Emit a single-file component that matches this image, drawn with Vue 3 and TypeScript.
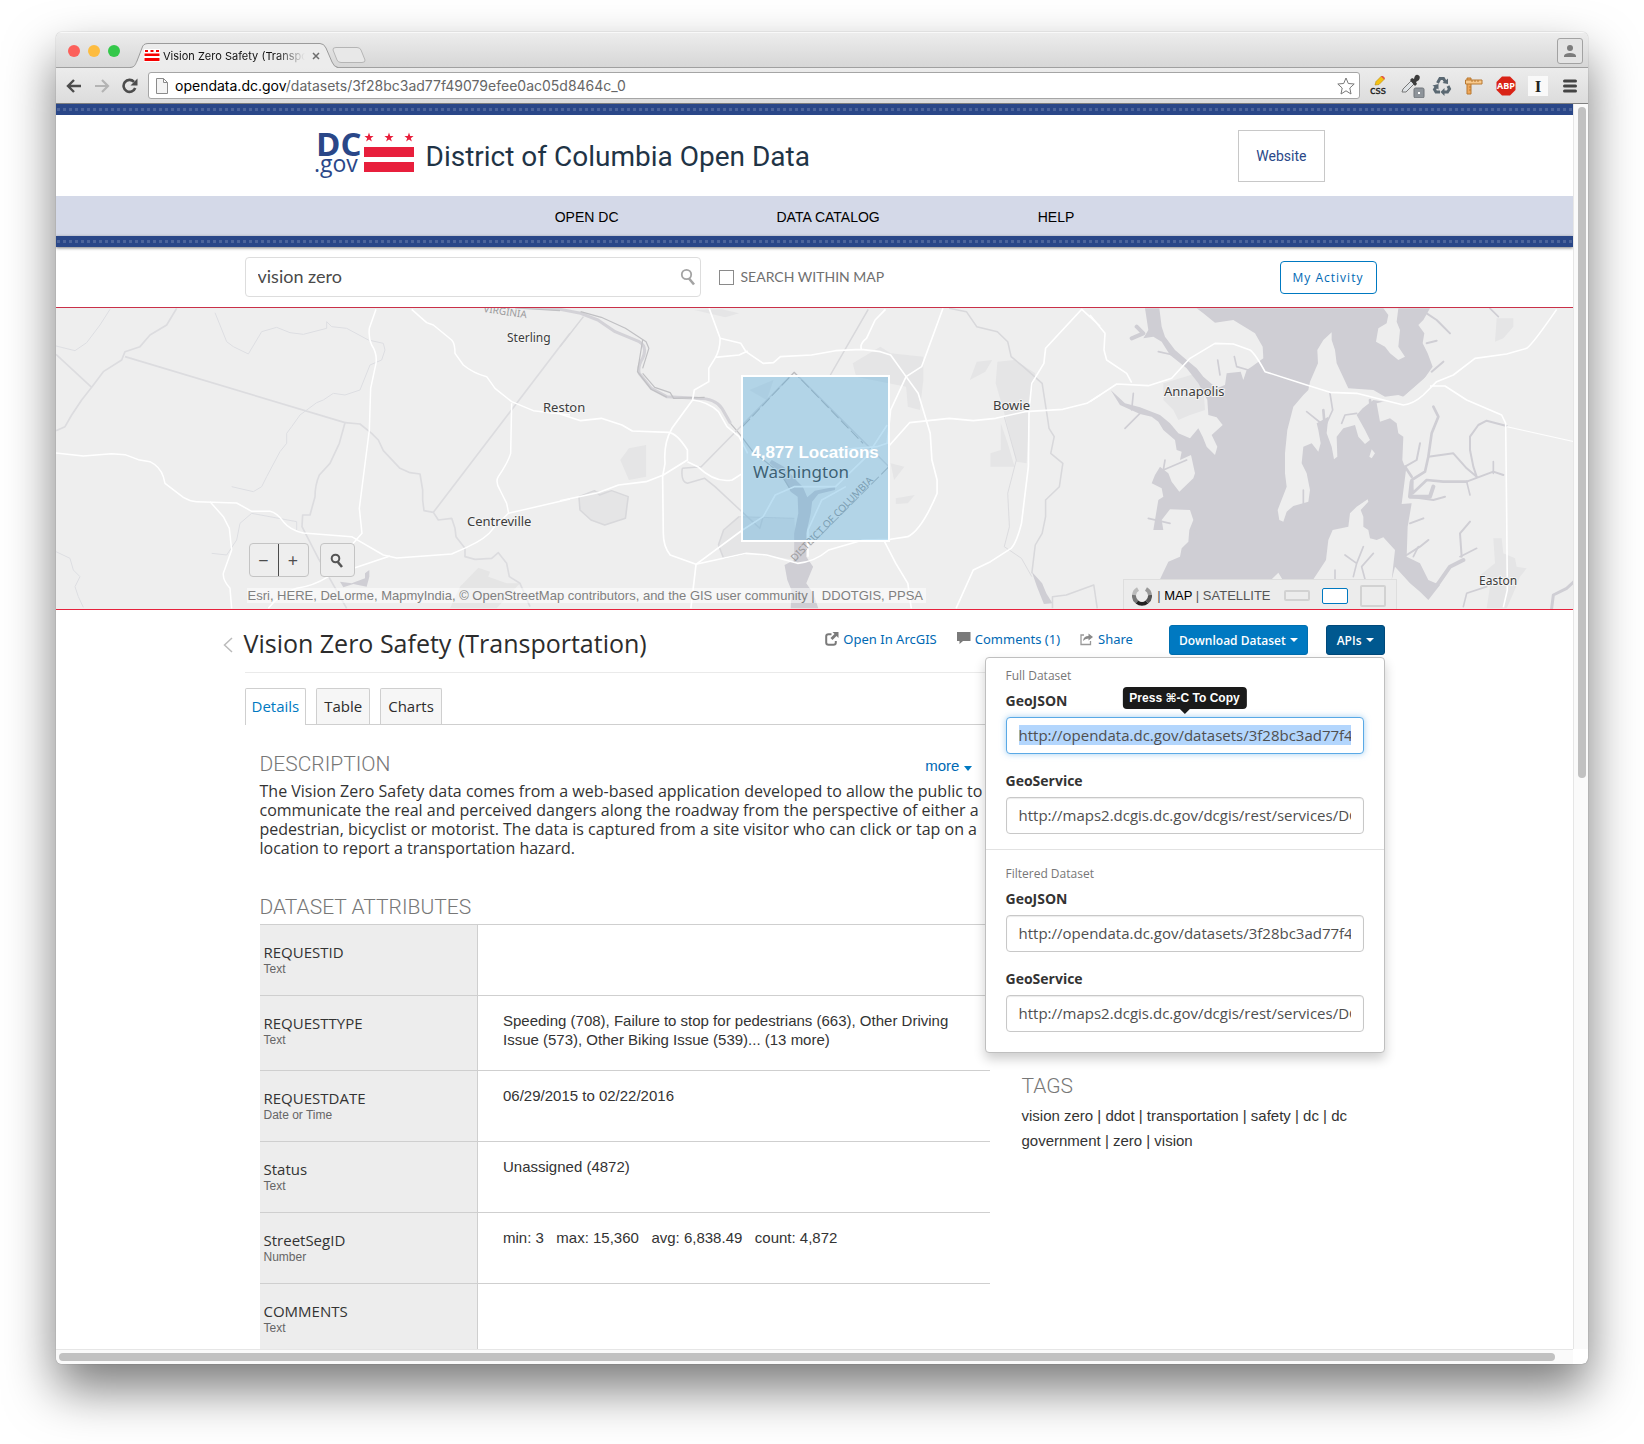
<script setup lang="ts">
import { onMounted, ref } from 'vue'

interface Attribute {
  name: string
  type: string
  value: string
}

const attributes: Attribute[] = [
  { name: 'REQUESTID', type: 'Text', value: '' },
  {
    name: 'REQUESTTYPE',
    type: 'Text',
    value: 'Speeding (708), Failure to stop for pedestrians (663), Other Driving Issue (573), Other Biking Issue (539)... (13 more)',
  },
  { name: 'REQUESTDATE', type: 'Date or Time', value: '06/29/2015 to 02/22/2016' },
  { name: 'Status', type: 'Text', value: 'Unassigned (4872)' },
  { name: 'StreetSegID', type: 'Number', value: 'min: 3   max: 15,360   avg: 6,838.49   count: 4,872' },
  { name: 'COMMENTS', type: 'Text', value: '' },
]

const tabs = ['Details', 'Table', 'Charts']
const activeTab = ref('Details')
const query = ref('vision zero')
const withinMap = ref(false)

const geojson = 'http://opendata.dc.gov/datasets/3f28bc3ad77f49079efee0ac05d8464c_0.geojson'
const service = 'http://maps2.dcgis.dc.gov/dcgis/rest/services/DCGIS_DATA/Transportation_WebMercator'

const firstUrl = ref<HTMLInputElement | null>(null)
onMounted(() => {
  firstUrl.value?.focus({ preventScroll: true })
  firstUrl.value?.select()
})
</script>

<template>
  <div class="window">
    <div class="titlebar">
      <div class="lights"><i class="red"></i><i class="yellow"></i><i class="green"></i></div>
      <div class="tab">
        <svg class="tab-shape" viewBox="0 0 208 25" width="208" height="25" aria-hidden="true">
          <path d="M0 25C5 24 5 22 7 18L12 5Q13 1 18 1H190Q194 1 196 5L202 19Q204 24 208 25Z" fill="#ececec" />
          <path d="M0 24.5C5 24 5 22 7 18L12 5Q13 .5 18 .5H190Q194 .5 196 5L202 19Q204 24 208 24.5" fill="none" stroke="#9b9b9b" />
        </svg>
        <div class="tab-body">
          <svg class="favicon" viewBox="0 0 16 13" width="16" height="13" aria-hidden="true">
            <path d="M0 0H16V13H0Z" fill="#fff" />
            <path d="M.5 4.500H15.500V7H.5ZM.5 9H15.500V12H.5ZM1 1H4V3H1ZM6.500 1H9.500V3H6.500ZM12 1H15V3H12Z" fill="#f60000" />
          </svg>
          <span class="tab-title">Vision Zero Safety (Transportation)</span>
          <svg viewBox="0 0 8 8" width="8" height="8" aria-hidden="true"><path d="M1 1L7 7M7 1L1 7" stroke="#6d6d6d" stroke-width="1.500" /></svg>
        </div>
      </div>
      <svg class="new-tab" viewBox="0 0 34 17" width="34" height="17" aria-hidden="true">
        <path d="M4 .5H25Q28 .5 29 3L33 13Q33.500 15.500 30 15.500H9Q6 15.500 5 13L1 3Q.5 .5 4 .5Z" fill="#e8e8e8" stroke="#b5b5b5" />
      </svg>
      <button class="profile" aria-label="Profile">
        <svg viewBox="0 0 12 12" width="12" height="12"><circle cx="6" cy="3" r="3" fill="#7c7c7c" /><path d="M0 12V10.500Q1 8 6 8T12 10.500V12Z" fill="#7c7c7c" /></svg>
      </button>
    </div>

    <div class="toolbar">
      <div class="history">
        <svg viewBox="0 0 16 14" width="16" height="14"><path d="M8 1L2 7L8 13M2 7H15" fill="none" stroke="#4c4c4c" stroke-width="2.400" /></svg>
        <svg viewBox="0 0 16 14" width="16" height="14"><path d="M8 1L14 7L8 13M14 7H1" fill="none" stroke="#b4b4b4" stroke-width="2.200" /></svg>
        <svg viewBox="0 0 16 16" width="16" height="16"><path d="M13.200 10A6 6 0 1 1 12 3.800" fill="none" stroke="#4c4c4c" stroke-width="2.600" /><path d="M15.500 .5V7.500H8.500Z" fill="#4c4c4c" /></svg>
      </div>
      <div class="address">
        <svg viewBox="0 0 12 16" width="12" height="16"><path d="M.5 .5H7.500L11.500 4.500V15.500H.5ZM7.500 .5V4.500H11.500" fill="#f4f4f4" stroke="#8b8b8b" /></svg>
        <span class="url"><b>opendata.dc.gov</b>/datasets/3f28bc3ad77f49079efee0ac05d8464c_0</span>
        <svg viewBox="0 0 18 18" width="18" height="18"><path d="M9 1L11.300 6.500L17.200 7L12.800 11L14 17L9 13.800L4 17L5.200 11L.8 7L6.700 6.500Z" fill="#fff" stroke="#777" /></svg>
      </div>
      <div class="extensions">
        <svg viewBox="0 0 20 20" width="20" height="20">
          <path d="M6 9L7 5.500L12.500 0L15.500 3L10 8.500Z" fill="#f5c211" stroke="#b98a10" stroke-width=".6" /><path d="M12 .5L13.500 -.5L16 2L15.200 3.500Z" fill="#e2574c" />
          <text x="1" y="18" font-family="DejaVu Sans" font-size="10" fill="#1b1b1b" stroke="#1b1b1b" stroke-width=".3">css</text>
        </svg>
        <svg class="dropper" viewBox="0 0 24 24" width="24" height="24">
          <path d="M1 18L2 15L10 7L13 10L5 18Z" fill="#dfe3e6" stroke="#777" /><path d="M9 6L11 4L13 5Q14 0 17 1T18 6L15 8L16 10L14 12Z" fill="#3c3c3c" />
          <rect x="13" y="14" width="10" height="10" rx="1.500" fill="#8e949a" stroke="#70757a" /><rect x="17" y="18" width="2" height="2" fill="#fff" />
        </svg>
        <svg viewBox="0 0 20 20" width="20" height="20">
          <g fill="none" stroke="#5a6872" stroke-width="3"><path d="M5.500 7L8 2.500H11.500L13.500 6" /><path d="M16 10L17.500 13L15.500 16H12" /><path d="M8 16H4L2.500 13.500L4 11" /></g>
          <path d="M10.500 7L16 8V2.500ZM12.500 12V20L8.500 16ZM.5 9.500L6.500 8V13.500Z" fill="#5a6872" />
        </svg>
        <svg viewBox="0 0 20 20" width="20" height="20"><path d="M3 2H7V18H3Z" fill="#f0a758" stroke="#b87930" /><path d="M1.500 4H18V8H1.500Z" fill="#f8c98c" stroke="#b87930" /><path d="M8 4V6M11 4V6M14 4V6M5 11H7M5 14H7" stroke="#b87930" /></svg>
        <svg viewBox="0 0 20 20" width="20" height="20">
          <path d="M6 .5H14L19.500 6V14L14 19.500H6L.5 14V6Z" fill="#d92316" />
          <text x="10" y="13" text-anchor="middle" font-family="Open Sans" font-size="9" font-weight="700" fill="#fff">ABP</text>
        </svg>
        <svg viewBox="0 0 20 20" width="20" height="20">
          <rect width="20" height="20" fill="#f9f9f9" />
          <text x="10" y="16" text-anchor="middle" font-family="Liberation Serif" font-size="17" font-weight="700" fill="#222">I</text>
        </svg>
        <svg class="burger" viewBox="0 0 14 14" width="14" height="14"><path d="M1.500 2H12.500M1.500 7H12.500M1.500 12H12.500" stroke="#444" stroke-width="3" stroke-linecap="round" /></svg>
      </div>
    </div>

    <div class="viewport">
      <div class="page">
        <div class="stripe"></div>
        <header class="site">
          <div class="container brand">
            <svg class="logo" viewBox="315 130 100 50" width="100" height="50" role="img" aria-label="DC.gov">
              <g fill="#2a4788">
                <text x="316" y="155" font-family="Open Sans" font-size="33" font-weight="700">DC</text>
                <text x="314" y="171" font-family="Open Sans" font-size="23">.gov</text>
              </g>
              <g fill="#e81f3c">
                <path d="M364 146H414V156H364ZM364 161H414V171H364Z" />
                <path id="star" d="M369 131.500L370.200 135H373.600L370.800 137.200L371.900 140.600L369 138.500L366.100 140.600L367.200 137.200L364.400 135H367.800Z" />
                <use href="#star" x="20" /><use href="#star" x="40" />
              </g>
            </svg>
            <h1>District of Columbia Open Data</h1>
            <a class="website" href="#">Website</a>
          </div>
          <nav>
            <a href="#">OPEN DC</a><a href="#">DATA CATALOG</a><a href="#">HELP</a>
          </nav>
        </header>
        <div class="stripe raised"></div>

        <div class="search-row">
          <div class="container search">
            <div class="search-box">
              <input v-model="query" type="text" aria-label="Search datasets" />
              <svg viewBox="0 0 16 18" width="16" height="18"><circle cx="6.500" cy="6.500" r="4.700" fill="none" stroke="#a3a3a3" stroke-width="1.800" /><path d="M9 10.500L14 16.500" stroke="#a3a3a3" stroke-width="2.600" /></svg>
            </div>
            <label class="within"><input v-model="withinMap" type="checkbox" />SEARCH WITHIN MAP</label>
            <button class="activity">My Activity</button>
          </div>
        </div>

        <section class="map" aria-label="Map">
          <svg class="canvas" viewBox="56 308 1517 301" preserveAspectRatio="xMidYMid slice">
            <rect x="56" y="308" width="1517" height="301" fill="#eeeeee" />

            <g transform="translate(50 300) scale(.33333)" fill="none" stroke-linejoin="round">
              <path d="M1200 925L1230 860L1285 803L1320 815L1315 830L1370 850L1410 850L1340 925Z" fill="#e5e5e5" stroke="none" />
              <path d="M870 845L905 850L945 835V820L958 810V830L950 860L910 852L880 862Z" fill="#cfced4" stroke="none" />
              <g stroke="#dcdcdf" stroke-width="5">
                <path d="M18 392L45 380L65 345L95 300L125 262L160 215L215 180L225 155L270 140L300 105L350 75L380 25M18 163L125 262M225 170L885 368L868 430L840 490L808 525Q795 555 795 590L780 645H758L756 680L805 775L890 925" />
                <path d="M885 368L930 372L965 400L985 420L1000 452L1050 505L1080 518L1110 522L1118 570V600L1122 632L1150 637L1560 100M1150 637L1165 660L1205 655L1215 685L1218 710L1245 745V770L1275 778L1325 775L1345 758L1370 790L1378 830L1410 850L1440 920" />
              </g>
              <g stroke="#dddee2" stroke-width="3">
                <path d="M18 138L75 152L110 128L150 75L180 28M495 38L530 125L550 140L595 162L635 95L680 82L720 98L760 103L830 85V65L845 80L890 85L955 120L1000 130L1005 150L995 180L960 195L930 270L885 285L850 280L820 300L800 308L750 345L725 380L710 400V430L690 455L650 530L635 560L610 575L545 560" />
                <path d="M18 755L60 775L70 810L90 830L75 860L85 890L100 922M485 760L530 765L560 720L570 670L605 640L740 665V690" />
              </g>
              <g stroke="#fff" stroke-width="4.500">
                <path d="M18 459L100 468L185 461L225 464L265 479L300 485Q330 500 340 530L345 550L400 592Q420 604 440 605L560 609L605 634H660Q680 638 700 665Q720 690 760 699L905 710L1000 765L1040 774L1205 762L1250 742Q1310 715 1330 685L1375 640L1560 597" />
                <path d="M480 605L520 650L538 685L545 750L520 820Q518 840 540 865L545 925M978 28L958 85Q955 115 965 135Q982 160 978 190L962 265L958 390L928 625L936 700L905 735M1085 28L1130 68L1150 75L1205 120Q1215 130 1215 160L1240 195Q1270 220 1310 230L1335 265L1385 305L1450 332L1560 345" />
                <path d="M1385 310L1382 460Q1375 485 1345 530Q1335 545 1350 570L1370 610L1376 640M1020 768L835 830Q790 858 740 865Q690 880 655 925" />
              </g>
            </g>

            <g transform="translate(560 300) scale(.34439 .33333)" fill="none" stroke-linejoin="round">
              <path d="M850 190L930 140L960 160L1055 170V240L1045 330L1010 320L1005 260L860 230ZM1270 185L1320 180L1380 220L1365 300L1355 490L1325 485L1290 340L1265 250ZM200 445L250 435V530L200 540L175 480ZM55 590L100 572H150L198 590L190 655L130 675L90 660L58 630ZM460 735L475 690L520 650L680 655L690 780L540 760L475 775ZM1190 240L1210 185L1255 180L1235 215ZM975 595L1030 585L1010 610L975 612ZM390 30L470 28L520 40L480 52ZM550 270L620 240L600 300ZM960 490L1000 500L970 540ZM1280 370L1300 430L1320 500H1250V460L1280 450Z" fill="#e5e5e6" />
              <path d="M615 480L650 500L690 545L705 560L718 592L740 572L800 560L798 570L750 582L732 605L728 640L715 700V770L735 800L715 850L735 880L750 925H670L672 870L660 840L652 795L680 780V700L692 640L690 590L670 575L640 520L608 488Z" fill="#cfced4" />
              <path d="M1370 815L1400 850L1412 880L1430 910L1405 912L1385 860Z" fill="#cfced4" />
              <path d="M-130 20L0 28L60 40L110 60L160 95L230 125Q255 140 240 175Q225 200 230 220L265 265L310 290L400 295Q450 295 470 325L495 370" stroke="#d3d2d7" stroke-width="9" />
              <path d="M60 35L120 52L190 85L250 125L258 145L240 205M240 220L275 262L320 278L330 295L420 292M-130 24L0 32M495 370L520 400L560 455L640 520L670 570M240 120L225 215L265 268L310 292" stroke="#c0c0c3" stroke-width="3.500" />
              <g stroke="#d8d8db" stroke-width="4.500">
                <path d="M68 50L0 140M895 28L785 225M355 505Q350 545 370 550L420 535L450 560L580 685L590 650M355 505L410 500L680 217L955 500M460 735L475 690L520 650M55 590L100 572L115 585L150 572L198 590L190 655L130 675L90 660L58 630ZM460 735L475 775L540 760M1430 925V890L1470 885L1550 855L1560 925" />
                <path d="M1130 25L1180 35L1210 80L1270 95L1300 125L1310 170L1345 200L1400 250L1415 350L1420 385L1435 410L1425 460L1460 490L1450 560L1410 600V650L1400 700L1380 735L1370 820" />
                <path d="M1290 350L1325 480L1300 580L1305 680L1290 740L1340 775L1370 830M520 650L680 655" stroke-width="2.500" />
              </g>
              <path d="M955 500L680 785M530 380L680 217L880 430" stroke="#b9b9bb" stroke-width="3" stroke-dasharray="32 10" />
              <g stroke="#fff" stroke-width="4.800">
                <path d="M433 25L465 115Q465 150 450 175L432 205V245L390 270L385 300L325 385Q300 430 305 490L298 530L300 700Q300 740 320 765L395 793L540 760L600 765L690 790Q740 785 780 750L880 720L960 718L1010 710Q1050 690 1095 580V540L1080 480L1075 400L1040 280L1005 230L960 165L930 155L875 148L800 152L730 165L640 170L620 188L590 190L540 155L525 130L465 115M450 172L520 165L545 153M875 148Q870 130 890 115L915 60L945 28" />
                <path d="M0 342L60 362L120 355L180 375L210 393L315 397Q340 400 370 450V480L300 525L250 545L170 555L110 578L0 602M370 485L400 500Q450 550 500 540L530 520M385 300Q430 305 460 335L485 380L520 410L545 460M1112 25L1050 200L1005 230L960 330L950 430L920 440L800 450M955 438L1015 368L1130 355L1200 362L1265 355L1350 335L1460 328L1530 310L1568 285" />
                <path d="M1568 78L1515 28L1410 145L1405 190L1370 250L1362 330L1360 500L1340 670Q1325 730 1310 745L1250 785L1200 810L1150 925M380 925L395 793L530 690L590 650L625 585L680 560L800 560L890 470L950 375M940 720L975 790L1010 850L1020 925M720 770V690L760 600L830 560" />
              </g>
            </g>

            <g transform="translate(1090 300) scale(.33333)" fill="none" stroke-linejoin="round">
              <path d="M220 250L320 220L340 260L345 330L300 345L265 360L250 330L220 300ZM1220 55H1270V80L1240 115L1215 125ZM1210 715H1235L1240 760L1275 775L1280 800L1310 805L1290 830L1270 880L1250 925H1190L1200 860L1165 830L1215 790Z" fill="#e5e5e6" />
              <path d="M165 25H1020L1000 60L985 75L1003 100L998 130L1013 160L1028 200L1000 240L940 290L860 310L870 365L900 355L920 370L925 400L940 410L937 480L948 510L935 612L965 610L953 680L950 770L990 790L1015 840L1050 855L1015 900L990 875L960 850L915 800L905 840L920 925H200L210 838L235 785L270 770L275 745L295 725L298 690L310 660L300 630L240 628L215 660L220 690L190 690L205 600L220 590L215 565L185 550L195 525L210 500L235 520L245 545L268 575L310 535L315 520L303 465L270 480L275 455L260 450L255 420L220 390L205 365L185 350L150 342L90 315L62 270L105 310L150 322L210 345L240 370L265 400L300 415L325 385L338 410L350 440L375 465L382 440L365 405L398 375L380 352L355 345L352 300L325 250L290 205L240 165L215 125L190 110L160 115L175 90Z" fill="#cfced4" />
              <g fill="#eeeeee">
                <path d="M208 25H320L340 40L375 68L430 60L495 100L518 140L520 175L485 200L470 210L460 240L452 215L410 220L405 255L380 265L340 230L320 205L290 180L255 150L225 110L215 80Z" />
                <path d="M725 97L700 120L682 150L684 190L660 245L655 270L640 285L610 320L592 390L585 460V520L590 560L563 630L568 660L580 665L590 635L610 618L655 605L660 570L650 520L635 490L640 440L665 430L685 455L692 430L685 390L680 370L715 350L710 400L725 440L732 478L742 470L740 410L760 385L795 375L805 410L825 432L840 420L825 390L800 345L818 325L850 300L940 315L1025 240L1020 220L940 290L925 285L885 290L850 270L775 265L740 190L735 150L725 120Z" />
                <path d="M880 25L895 45L890 70L865 85L858 125L885 140L900 160L925 180L945 170L925 140L930 90L920 65L925 25ZM845 448L855 460L845 475L838 470ZM833 598L800 620L780 640L775 680L728 690L715 720L708 780L685 815L670 838L650 925H930L905 840L915 750L880 712L860 720L840 715L835 690L820 680L820 650L812 630L835 605ZM545 838L565 818L577 838Z" />
              </g>
              <g stroke="#cfced4" stroke-width="6" stroke-linecap="round">
                <path d="M945 500L980 480L990 430M1015 470L1090 460L1130 505L1160 530L1150 500L1140 450V410L1165 375L1190 362L1250 378M1130 545L1170 530L1210 515L1240 525M1115 770L1110 700L1140 665M950 765L990 740L1015 720M960 670L1000 655M1010 40L1040 60L1080 100M1025 215L1060 185M1010 130L1040 122M960 590L1030 600L1065 590" />
                <path d="M790 830L800 790L765 765M850 760L815 800L825 838M700 375L650 335M705 380L728 330L720 280M755 370L765 345L800 340M205 155L250 165M130 280L125 330M105 385L150 340M383 180L390 225M433 170L440 200L475 210M1120 920L1130 880L1190 860M1200 25L1225 50M735 838V810M820 740L800 790M985 740L970 770M1110 770L1160 745M1130 545L1140 585M1210 485V520M225 480L220 510L290 480M175 655L240 670M320 700L310 690M640 570V610" stroke-width="5" />
                <path d="M1030 320L1045 350L1025 400L1015 470L1005 515L965 540L968 580L1010 540L1060 545L1130 545M840 300L845 350M700 330L705 390M945 500L965 530" stroke-width="8" />
                <path d="M1015 880L1045 850L1080 800L1120 780M965 545L960 590L1020 590L1030 560M140 80L160 100L125 115" stroke-width="12" />
                <path d="M1385 925L1390 885L1430 865L1452 845" stroke-width="9" />
              </g>
              <g stroke="#fff" stroke-width="4.800">
                <path d="M0 45L45 100L42 150L50 180L110 220L125 248M0 305L80 252L175 257L245 235L300 175L375 130L430 132L480 150Q495 160 525 215L650 255L720 277L800 280L940 315Q970 312 1000 285L1040 245L1090 225L1155 175L1250 162L1310 145Q1330 130 1400 28M1020 258H1065L1130 300L1235 345L1247 370L1250 640L1252 870L1240 922" />
                <path d="M1250 380L1452 425" stroke-width="3" />
              </g>
            </g>

            <g class="places">
              <text x="507" y="342" font-size="12">Sterling</text>
              <text x="543" y="412">Reston</text>
              <text x="467" y="526">Centreville</text>
              <text x="993" y="410">Bowie</text>
              <text x="1164" y="396">Annapolis</text>
              <text x="1479" y="585" font-size="12">Easton</text>
              <text x="753" y="478" font-size="17">Washington</text>
            </g>
            <g class="regions">
              <text transform="translate(483 312) rotate(8)">VIRGINIA</text>
              <text transform="translate(795 562) rotate(-46)">DISTRICT OF COLUMBIA</text>
            </g>
            <rect x="742" y="376" width="147" height="165" fill="#42a4db" fill-opacity=".35" stroke="#fff" stroke-width="2" />
            <text class="count" x="815" y="458" text-anchor="middle">4,877 Locations</text>
          </svg>

          <div class="map-overlay container">
            <div class="map-left">
              <div class="map-buttons">
                <div class="zoom"><button aria-label="Zoom out">−</button><button aria-label="Zoom in">+</button></div>
                <button class="find" aria-label="Find on map">
                  <svg viewBox="0 0 14 16" width="14" height="16"><circle cx="5.500" cy="6.500" r="3.800" fill="none" stroke="#555" stroke-width="2" /><path d="M7.800 10L12 15" stroke="#555" stroke-width="2.600" /></svg>
                </button>
              </div>
              <p class="credits">Esri, HERE, DeLorme, MapmyIndia, © OpenStreetMap contributors, and the GIS user community |&nbsp; DDOTGIS, PPSA</p>
            </div>
            <div class="map-modes">
              <svg viewBox="0 0 20 20" width="20" height="20" fill="none" stroke-width="4">
                <path d="M6 3A8 8 0 0 0 2 9" stroke="#bbb" /><path d="M2 9A8 8 0 0 0 5 16" stroke="#777" /><path d="M5 16A8 8 0 0 0 15 16" stroke="#222" /><path d="M15 16A8 8 0 0 0 18 9" stroke="#555" /><path d="M18 9A8 8 0 0 0 14 3" stroke="#999" />
              </svg>
              <span class="mode">| <b>MAP</b> | SATELLITE</span>
              <button class="size small" aria-label="Small map"></button>
              <button class="size medium" aria-label="Medium map"></button>
              <button class="size large" aria-label="Large map"></button>
            </div>
          </div>
        </section>

        <main class="container content">
          <div class="heading">
            <a class="back" href="#" aria-label="Back"><svg viewBox="0 0 10 16" width="10" height="16"><path d="M9 1L1.500 8L9 15" fill="none" stroke="#bbb" stroke-width="1.500" /></svg></a>
            <h2>Vision Zero Safety (Transportation)</h2>
            <div class="links">
              <a href="#"><svg viewBox="0 0 14 14" width="14" height="14"><path d="M6.500 2.200H3.500Q1.200 2.200 1.200 4.500V10.500Q1.200 12.800 3.500 12.800H8.500Q10.800 12.800 10.800 10.500V9" fill="none" stroke="#7a7a7a" stroke-width="2" /><path d="M7.500 0H13.500V6L11.500 4L7.500 8L5.500 6L9.500 2Z" fill="#7a7a7a" /></svg>Open In ArcGIS</a>
              <a href="#"><svg viewBox="0 0 14 14" width="14" height="14"><path d="M0 0H13.500V9H6L2.500 12V9H0Z" fill="#7a7a7a" /></svg>Comments (1)</a>
              <a href="#"><svg viewBox="0 0 14 14" width="14" height="14"><path d="M4 3H1V12.500H10.500V9" fill="none" stroke="#999" stroke-width="1.300" /><path d="M3 9Q3.500 4 8.500 4V1.500L13 5L8.500 8.500V6.500Q5 6.500 3 9Z" fill="#8a8a8a" /></svg>Share</a>
            </div>
            <button class="action">Download Dataset<i></i></button>
            <div class="menu">
              <button class="action open" aria-expanded="true">APIs<i></i></button>
              <div class="panel">
                <div class="group">
                  <p>Full Dataset</p>
                  <label for="full-geojson">GeoJSON</label>
                  <div class="field">
                    <div class="tip" role="tooltip">Press ⌘-C To Copy</div>
                    <input id="full-geojson" ref="firstUrl" class="selected" type="text" :value="geojson" readonly />
                  </div>
                  <label for="full-service">GeoService</label>
                  <div class="field"><input id="full-service" type="text" :value="service" readonly /></div>
                </div>
                <div class="group">
                  <p>Filtered Dataset</p>
                  <label for="filtered-geojson">GeoJSON</label>
                  <div class="field"><input id="filtered-geojson" type="text" :value="geojson" readonly /></div>
                  <label for="filtered-service">GeoService</label>
                  <div class="field"><input id="filtered-service" type="text" :value="service" readonly /></div>
                </div>
              </div>
            </div>
          </div>

          <div class="tabs" role="tablist">
            <button v-for="t in tabs" :key="t" role="tab" :class="{ active: t === activeTab }" :aria-selected="t === activeTab" @click="activeTab = t">{{ t }}</button>
          </div>

          <div class="columns">
            <div class="details">
              <div class="row-head"><h3>DESCRIPTION</h3><a href="#">more <i></i></a></div>
              <p class="description">The Vision Zero Safety data comes from a web-based application developed to allow the public to communicate the real and perceived dangers along the roadway from the perspective of either a pedestrian, bicyclist or motorist. The data is captured from a site visitor who can click or tap on a location to report a transportation hazard.</p>
              <h3 class="attributes-title">DATASET ATTRIBUTES</h3>
              <table>
                <tbody>
                  <tr v-for="a in attributes" :key="a.name">
                    <th scope="row">{{ a.name }}<small>{{ a.type }}</small></th>
                    <td>{{ a.value }}</td>
                  </tr>
                </tbody>
              </table>
            </div>
            <aside>
              <h3>TAGS</h3>
              <p>vision zero | ddot | transportation | safety | dc | dc government | zero | vision</p>
            </aside>
          </div>
        </main>
      </div>
      <div class="vscroll"><i></i></div>
    </div>
    <div class="hscroll"><i></i></div>
  </div>
</template>

<style>
body {
  margin: 0;
  background: #fff;
}
</style>

<style scoped>
* {
  box-sizing: border-box;
}
h1, h2, h3, p {
  margin: 0;
  font-weight: 400;
}
a {
  text-decoration: none;
  color: #0069b4;
}
button {
  margin: 0;
  padding: 0;
  font-family: inherit;
  cursor: pointer;
}
svg {
  display: block;
  flex: none;
}
.window {
  display: flex;
  flex-direction: column;
  height: calc(100vh - 112px);
  margin: 32px 56px 80px;
  border-radius: 6px;
  overflow: hidden;
  background: #fff;
  box-shadow: 0 0 1px rgba(0, 0, 0, 0.5), 0 25px 50px rgba(0, 0, 0, 0.52);
  font-family: "Open Sans", "Noto Sans", sans-serif;
  color: #333;
}
.titlebar {
  display: flex;
  align-items: flex-end;
  flex: none;
  height: 36px;
  padding: 0 5px 0 12px;
  background: linear-gradient(#ededed, #d6d6d6);
  box-shadow: inset 0 1px #f8f8f8, inset 0 -1px #a0a0a0;
}
.lights {
  display: flex;
  gap: 8px;
  align-self: center;
  padding-top: 2px;
}
.lights i {
  width: 12px;
  height: 12px;
  border-radius: 50%;
}
.red { background: #fc605b; }
.yellow { background: #fdbc40; }
.green { background: #34c84a; }
.tab {
  position: relative;
  width: 208px;
  height: 25px;
  margin-left: 10px;
}
.tab-shape {
  position: absolute;
  inset: 0;
}
.tab-body {
  position: relative;
  display: flex;
  align-items: center;
  gap: 3px;
  height: 25px;
  padding: 0 18px 0 14px;
}
.tab-title {
  flex: 1;
  margin-right: 4px;
  overflow: hidden;
  white-space: nowrap;
  font: 11px/16px Inter, sans-serif;
  color: #111;
  mask-image: linear-gradient(90deg, #000 80%, transparent);
}
.new-tab {
  margin: 0 0 4px -6px;
}
.profile {
  display: flex;
  align-items: center;
  justify-content: center;
  width: 26px;
  height: 26px;
  margin: 0 0 4px auto;
  border: 1px solid #a2a2a2;
  border-radius: 3px;
  background: #e4e4e4;
}
.toolbar {
  display: flex;
  align-items: center;
  flex: none;
  height: 36px;
  padding: 0 11px 0 10px;
  background: linear-gradient(#ececec, #dcdcdc);
  border-bottom: 1px solid #808080;
}
.history {
  display: flex;
  align-items: center;
  gap: 12px;
}
.address {
  display: flex;
  align-items: center;
  gap: 7px;
  flex: 1;
  height: 27px;
  margin-left: 10px;
  padding: 0 4px 0 7px;
  background: #fff;
  border: 1px solid #a5a5a5;
  border-radius: 3px;
}
.url {
  flex: 1;
  font: 14px/20px Inter, sans-serif;
  color: #666;
}
.url b {
  font-weight: 400;
  color: #000;
}
.extensions {
  display: flex;
  align-items: center;
  gap: 12px;
  margin-left: 9px;
}
.dropper {
  margin-right: -5px;
}
.burger {
  margin-left: 3px;
}
.viewport {
  display: flex;
  flex: 1;
  min-height: 0;
}
.page {
  flex: 1;
  min-width: 0;
  overflow: hidden;
}
.vscroll {
  flex: none;
  width: 15px;
  padding: 3px 0 0 4px;
  background: #fafafa;
  border-left: 1px solid #e6e6e6;
}
.vscroll i {
  display: block;
  width: 8px;
  height: 54%;
  border-radius: 4px;
  background: #c1c1c1;
}
.hscroll {
  flex: none;
  height: 15px;
  margin-right: 15px;
  padding: 3px 18px 0 3px;
  background: #fafafa;
  border-top: 1px solid #e6e6e6;
}
.hscroll i {
  display: block;
  height: 8px;
  border-radius: 4px;
  background: #c1c1c1;
}
.container {
  width: 1140px;
  max-width: 100%;
  margin: 0 auto;
}
.stripe {
  height: 11px;
  background: repeating-linear-gradient(90deg, #4c649b 0 3px, #2a4788 3px 6px) 1px 4px / 100% 3px no-repeat #2a4788;
}
.raised {
  position: relative;
  z-index: 1;
  box-shadow: 0 1px 3px rgba(0, 0, 0, 0.5);
}
.brand {
  display: flex;
  align-items: center;
  height: 81px;
  padding: 0 60px 0 70px;
}
.logo {
  overflow: visible;
}
.brand h1 {
  margin-left: 11px;
  padding-top: 2px;
  font: 28px/36px Roboto, sans-serif;
  color: #1f3446;
}
.website {
  margin-left: auto;
  padding: 15px 17px;
  border: 1px solid #c8c8c8;
  font: 14px/20px Roboto, sans-serif;
  color: #2a4788;
}
nav {
  display: flex;
  justify-content: center;
  gap: 158px;
  padding-top: 2px;
  background: #d4d9e8;
}
nav a {
  font: 14px/38px "Liberation Sans", Arial, sans-serif;
  color: #000;
}
.search-row {
  border-bottom: 1px solid #c93048;
}
.search {
  display: flex;
  align-items: center;
  height: 60px;
}
.search-box {
  display: flex;
  align-items: center;
  flex: 0 0 40%;
  height: 40px;
  padding: 0 4px 0 12px;
  border: 1px solid #ddd;
  border-radius: 4px;
}
.search-box input {
  flex: 1;
  min-width: 0;
  padding: 0 0 2px;
  border: 0;
  outline: 0;
  font: 18px/24px Lato, sans-serif;
  color: #4a4a4a;
}
.within {
  display: flex;
  align-items: center;
  gap: 7px;
  margin-left: 18px;
  font: 14px/20px Lato, sans-serif;
  color: #707070;
}
.within input {
  appearance: none;
  width: 15px;
  height: 15px;
  margin: 0;
  border: 1px solid #8a8a8a;
  background: #fff;
}
.activity {
  width: 97px;
  height: 33px;
  margin: 0 8px 0 auto;
  border: 1px solid #0079c1;
  border-radius: 4px;
  background: #fff;
  font-size: 12px;
  letter-spacing: 1px;
  color: #0069b4;
}
.map {
  position: relative;
  height: 302px;
  border-bottom: 1px solid #e6223c;
  box-shadow: inset 0 2px 3px rgba(0, 0, 0, 0.2);
}
.canvas {
  width: 100%;
  height: 301px;
}
.places text {
  font-family: "Noto Sans", sans-serif;
  fill: #3d3d3d;
  stroke: #f4f4f4;
  stroke-width: 2px;
  paint-order: stroke;
}
.places {
  font-size: 13px;
}
.regions {
  font: 10px "Noto Sans", sans-serif;
  fill: #9a9a9c;
}
.count {
  font: bold 17px "Liberation Sans", Arial, sans-serif;
  fill: #fff;
}
.map-overlay {
  position: absolute;
  right: 0;
  bottom: 0;
  left: 0;
  display: flex;
  align-items: flex-end;
  justify-content: space-between;
}
.map-left {
  padding: 0 0 6px 2px;
}
.map-buttons {
  display: flex;
  gap: 11px;
  margin: 0 0 11px 2px;
}
.zoom, .find {
  display: flex;
  align-items: center;
  justify-content: center;
  height: 34px;
  border: 1px solid #c4c4c4;
  border-radius: 4px;
  background: #eeeeee;
}
.zoom button {
  width: 28px;
  height: 32px;
  border: 0;
  background: none;
  font-size: 18px;
  color: #4c4c4c;
}
.zoom button + button {
  width: 30px;
  border-left: 1px solid #4c4c4c;
}
.find {
  width: 35px;
}
.credits {
  padding: 0 3px 0 1px;
  background: rgba(255, 255, 255, 0.5);
  font: 13px/15px "Liberation Sans", Arial, sans-serif;
  color: #808080;
}
.map-modes {
  display: flex;
  align-items: center;
  height: 30px;
  margin-right: -12px;
  padding: 2px 10px 0 8px;
  background: #ececec;
  border: 1px solid #dedede;
  border-bottom: 0;
}
.mode {
  margin: 0 13px 0 5px;
  font: 13px/20px "Liberation Sans", Arial, sans-serif;
  color: #555;
}
.mode b {
  font-weight: 400;
  color: #000;
}
.size {
  width: 26px;
  border: 2px solid #d2d2d2;
  border-radius: 2px;
  background: #ececec;
}
.small {
  height: 11px;
}
.medium {
  height: 16px;
  margin: 0 12px;
  border: 1px solid #0079c1;
  background: #fff;
}
.large {
  height: 22px;
}
.heading {
  position: relative;
  display: flex;
  align-items: flex-start;
  height: 63px;
  padding-top: 15px;
  border-bottom: 1px solid #eaeaea;
}
.back {
  width: 21px;
  margin: 12px 0 0 -22px;
}
h2 {
  margin-right: auto;
  font-size: 25px;
  line-height: 36px;
  color: #2c2c2c;
}
.links {
  display: flex;
  gap: 20px;
  margin-right: 36px;
}
.links a {
  display: flex;
  align-items: center;
  gap: 4px;
  font: 13px/28px "Noto Sans", sans-serif;
}
.action {
  display: flex;
  align-items: center;
  height: 30px;
  padding: 0 9px;
  border: 1px solid #006fb0;
  border-radius: 3px;
  background: #0079c1;
  font-size: 12px;
  font-weight: 600;
  color: #fff;
}
.action i {
  margin-left: 4px;
  border: 4px solid transparent;
  border-top-color: #fff;
  border-bottom: 0;
}
.menu {
  margin-left: 18px;
}
.open {
  padding: 0 10px;
  border-color: #00497a;
  background: #00588f;
}
.panel {
  position: absolute;
  top: 47px;
  right: 0;
  z-index: 2;
  width: 400px;
  background: #fff;
  border: 1px solid #bfbfbf;
  border-radius: 4px;
  box-shadow: 0 6px 12px rgba(0, 0, 0, 0.2);
}
.group {
  padding: 8px 20px 15px;
}
.group + .group {
  padding: 14px 20px 20px;
  border-top: 1px solid #e2e2e2;
}
.group p {
  margin-bottom: 5px;
  font-size: 12px;
  line-height: 20px;
  color: #777;
}
.group label {
  display: block;
  font-size: 14px;
  font-weight: 700;
  line-height: 20px;
}
.field {
  position: relative;
  padding: 6px 0 17px;
}
.field:last-child {
  padding-bottom: 0;
}
.field input {
  display: block;
  width: 100%;
  height: 37px;
  padding: 0 12px 2px;
  border: 1px solid #c8c8c8;
  border-radius: 4px;
  outline: 0;
  background: #fff;
  box-shadow: inset 0 1px 1px rgba(0, 0, 0, 0.08);
  font: 15px/20px "Open Sans", sans-serif;
  color: #4f4f4f;
}
.field input::selection {
  background: #b3d6fd;
  color: #4f4f4f;
}
.field .selected {
  border-color: #5aa9e6;
  box-shadow: 0 0 6px rgba(102, 175, 233, 0.6);
}
.tip {
  position: absolute;
  bottom: 62px;
  left: 50%;
  padding: 0 7px;
  transform: translateX(-50%);
  border-radius: 4px;
  background: #1a1a1a;
  font: bold 12px/22px "Liberation Sans", "DejaVu Sans", sans-serif;
  white-space: nowrap;
  color: #fff;
}
.tip::after {
  content: "";
  position: absolute;
  top: 100%;
  left: 50%;
  margin-left: -5px;
  border: 5px solid transparent;
  border-top-color: #1a1a1a;
  border-bottom: 0;
}
.tabs {
  display: flex;
  gap: 10px;
  margin-top: 15px;
  border-bottom: 1px solid #cfcfcf;
}
.tabs button {
  height: 36px;
  padding: 0 7px 2px;
  border: 1px solid #cfcfcf;
  border-bottom: 0;
  border-radius: 2px 2px 0 0;
  background: #f6f6f6;
  font-size: 15px;
  color: #2c2c2c;
}
.tabs .active {
  height: 37px;
  margin-bottom: -1px;
  padding: 0 6px 3px;
  background: #fff;
  color: #0079c1;
}
.columns {
  display: flex;
  gap: 32px;
  padding-left: 15px;
}
.details {
  flex: 0 0 730px;
  padding-top: 24px;
}
.row-head {
  display: flex;
  justify-content: space-between;
  padding-right: 18px;
}
.row-head a {
  font: 15px/33px "Liberation Sans", Arial, sans-serif;
}
.row-head i {
  display: inline-block;
  border: 4px solid transparent;
  border-top: 5px solid #0079c1;
  border-bottom: 0;
}
h3 {
  font: 300 21px/30px Roboto, sans-serif;
  color: #777;
}
.description {
  font-size: 16px;
  line-height: 19px;
}
.attributes-title {
  margin: 34px 0 2px;
}
table {
  width: 100%;
  border-collapse: collapse;
}
tr {
  border-top: 1px solid #cfcfcf;
}
th {
  width: 218px;
  height: 71px;
  padding: 17px 4px 0;
  border-right: 1px solid #cfcfcf;
  background: #ededed;
  font-size: 15px;
  font-weight: 400;
  line-height: 20px;
  text-align: left;
  vertical-align: top;
}
small {
  display: block;
  font: 12px/14px "Liberation Sans", Arial, sans-serif;
  color: #666;
}
td {
  padding: 15px 36px 21px 25px;
  font: 15px/19px "Liberation Sans", Arial, sans-serif;
  white-space: pre-wrap;
  vertical-align: top;
}
aside {
  flex: 1;
  padding-top: 346px;
}
aside p {
  margin-top: 2px;
  font: 15px/25px "Liberation Sans", Arial, sans-serif;
}
</style>
